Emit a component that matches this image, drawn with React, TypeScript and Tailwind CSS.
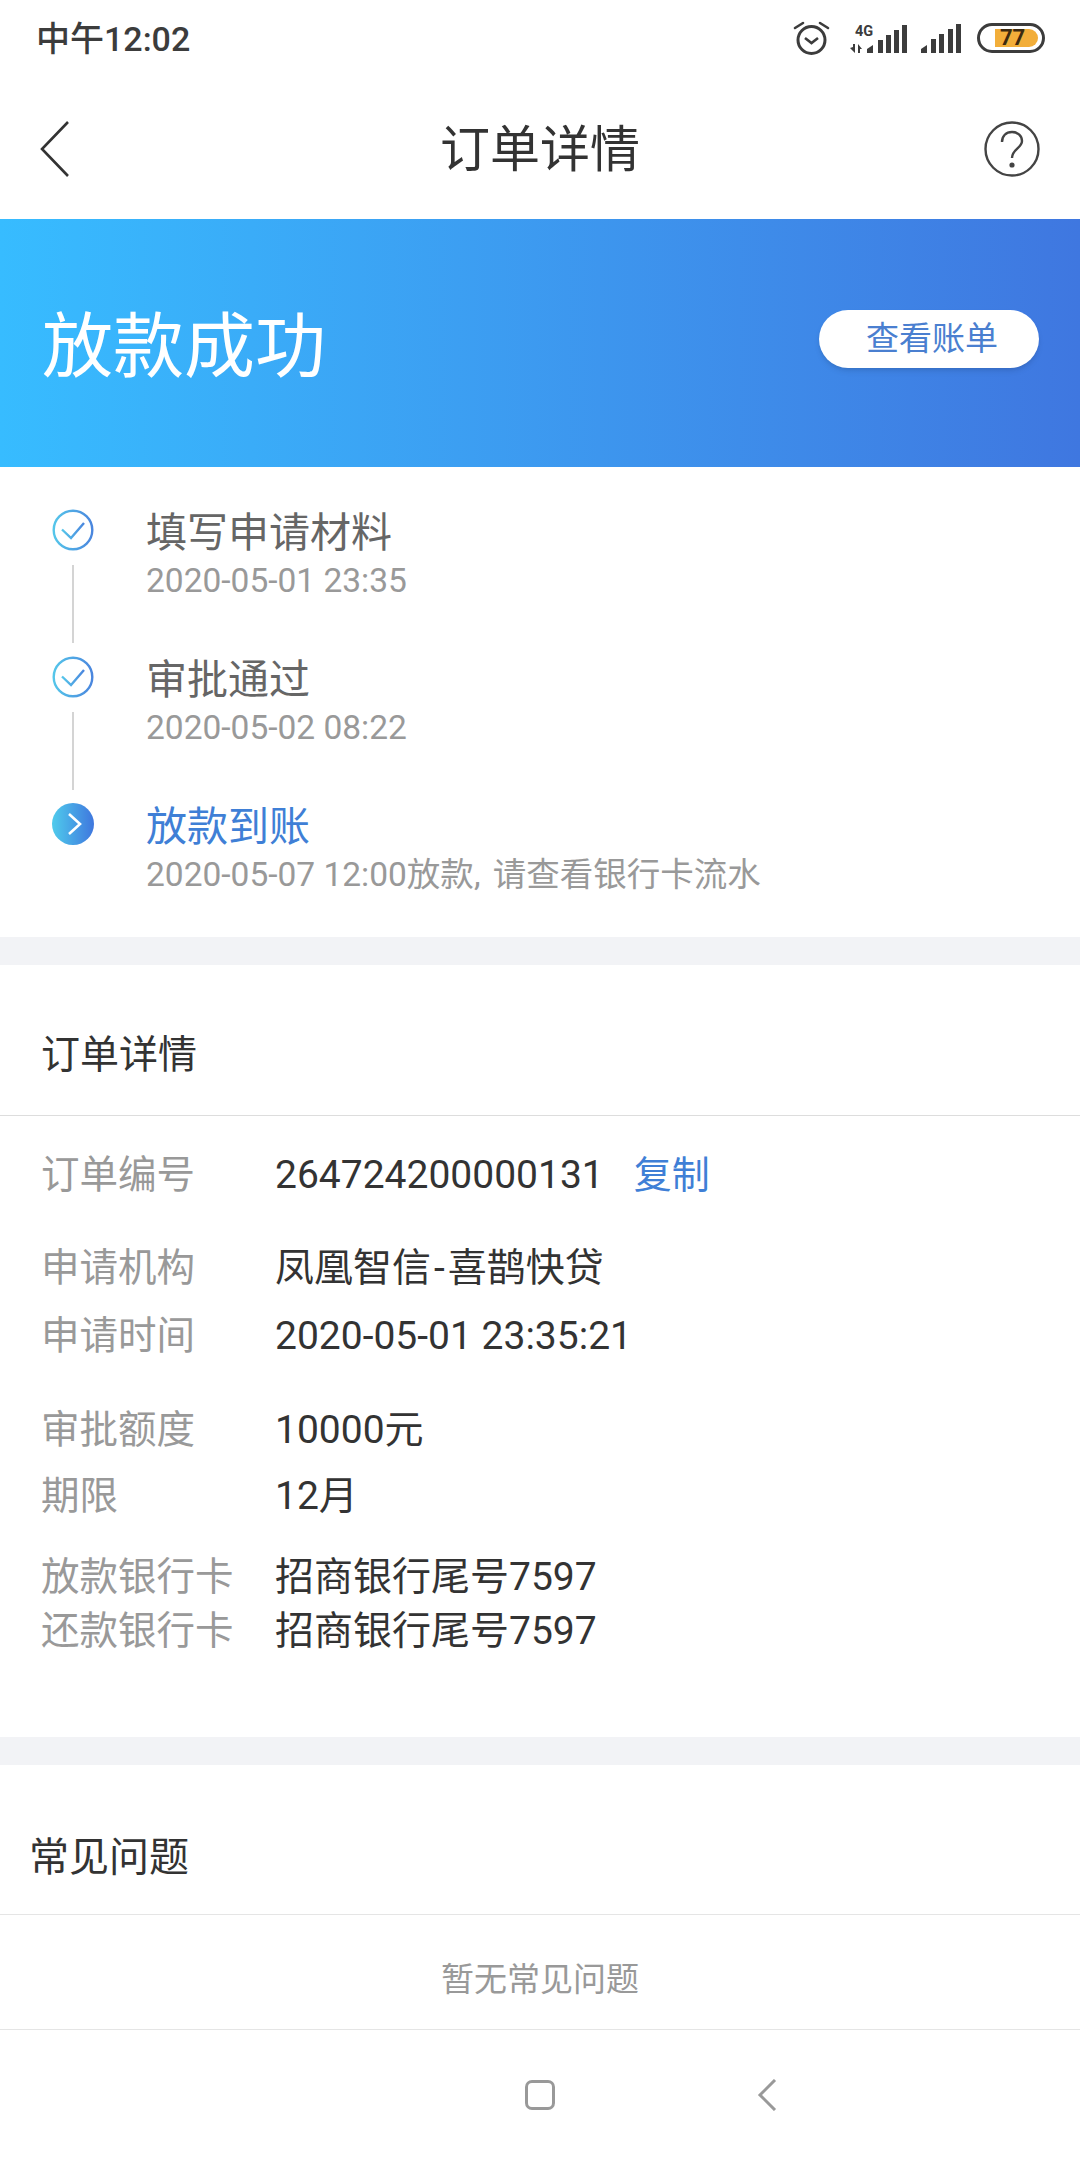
const sans = "font-['Roboto','Noto_Sans_CJK_SC',sans-serif]";

function CheckIcon() {
  return (
    <svg width="42" height="42" viewBox="0 0 42 42" fill="none">
      <defs>
        <linearGradient id="ok" x1="0" y1="0" x2="1" y2="0">
          <stop offset="0" stopColor="#55c6ea" />
          <stop offset="1" stopColor="#4a86de" />
        </linearGradient>
      </defs>
      <circle cx="21" cy="21" r="19.3" stroke="url(#ok)" strokeWidth="2.4" />
      <path d="M10 20.5l9 8.5 13-15" stroke="url(#ok)" strokeWidth="2.4" />
    </svg>
  );
}

function ArrowIcon() {
  return (
    <svg width="42" height="42" viewBox="0 0 42 42" fill="none">
      <defs>
        <linearGradient id="go" x1="0" y1="0" x2="1" y2="0">
          <stop offset="0" stopColor="#4fcbec" />
          <stop offset="1" stopColor="#3f77de" />
        </linearGradient>
      </defs>
      <circle cx="21" cy="21" r="21" fill="url(#go)" />
      <path d="M17 11l11 10-11 10" stroke="#fff" strokeWidth="2.6" />
    </svg>
  );
}

function StatusIcons() {
  return (
    <div className="flex items-center pb-[2px]">
      <svg width="37" height="34" viewBox="0 0 37 34" fill="none" stroke="#3c3c3c" strokeWidth="3">
        <circle cx="18.5" cy="19" r="13.5" />
        <path d="M12 17l6.5 5 6.5-5" strokeWidth="2.6" />
        <path d="M2 7l8-5M35 7l-8-5" strokeLinecap="round" strokeWidth="2.6" />
      </svg>
      <svg className="ml-[20px]" width="57" height="30" viewBox="0 0 57 30" fill="#3c3c3c">
        <text x="5" y="12.5" fontSize="14.5" fontWeight="700" fontFamily="Roboto">4G</text>
        <path d="M0 25l3-1v-3h2v9zM8 30V21l4 5h-2v4z" />
        <path d="M17 30v-4l6-4v8zM28 30V17h5v13zM36 30V12h5v18zM44 30V7h5v23zM52 30V2h5v28z" />
      </svg>
      <svg className="ml-[14px]" width="40" height="29" viewBox="0 0 40 29" fill="#3c3c3c">
        <path d="M0 29v-4l6-4v8zM10 29V15h5v14zM18 29V10h5v19zM27 29V5h5v24zM35 29V0h5v29z" />
      </svg>
      <div className="ml-[16px] flex h-[30px] w-[68px] items-center rounded-full border-[3px] border-[#3c3c3c]">
        <div className="ml-[15px] flex h-[18px] w-[43px] items-center justify-start rounded-r-full bg-[#f2ae3a] pl-[5px] text-[22px] font-bold leading-none text-[#3c2a10]">
          77
        </div>
      </div>
    </div>
  );
}

function Step({ icon, title, date, active, line }: { icon: React.ReactNode; title: string; date: React.ReactNode; active?: boolean; line?: boolean }) {
  return (
    <div className="flex h-[147px]">
      <div className="flex w-[146px] shrink-0 flex-col items-center pr-[1px]">
        <div className="h-[42px] w-[42px]">{icon}</div>
        {line && <div className="mt-[14px] h-[78px] w-[2px] bg-[#d4d4d4]" />}
      </div>
      <div>
        <div className={`text-[41px] leading-[48px] ${active ? "text-[#3f7fd6]" : "text-[#666666]"}`}>{title}</div>
        <div className="mt-[1px] text-[33.5px] leading-[46px] text-[#999999]">{date}</div>
      </div>
    </div>
  );
}

function Row({ label, children, className }: { label: string; children: React.ReactNode; className?: string }) {
  return (
    <div className={`flex text-[39px] leading-[54px] ${className ?? ""}`}>
      <div className="w-[234px] shrink-0 text-[38.5px] text-[#999999]">{label}</div>
      <div className="text-[#333333]">{children}</div>
    </div>
  );
}

export default function App() {
  return (
    <div className={`flex h-[2160px] w-[1080px] flex-col overflow-hidden bg-white ${sans}`}>
      {/* status bar */}
      <div className="flex h-[78px] items-center justify-between pl-[36px] pr-[35px]">
        <div className="text-[34px] font-medium text-[#3c3c3c]">中午12:02</div>
        <StatusIcons />
      </div>

      {/* title bar */}
      <div className="flex h-[141px] items-center px-[40px]">
        <div className="flex-1">
          <svg width="30" height="56" viewBox="0 0 30 56" fill="none" stroke="#333" strokeWidth="2.6">
            <path d="M28 1L2 28l26 27" />
          </svg>
        </div>
        <div className="pt-[4px] text-[50px] text-[#333333]">订单详情</div>
        <div className="flex flex-1 justify-end">
          <svg width="56" height="56" viewBox="0 0 56 56" fill="none" stroke="#444" strokeWidth="2.4">
            <circle cx="28" cy="28" r="26.5" />
            <path d="M18 21c0-6 4-10 10-10s10 4 10 9c0 7-10 8-10 17" />
            <circle cx="28" cy="44" r="1.4" fill="#444" />
          </svg>
        </div>
      </div>

      {/* banner */}
      <div className="flex h-[248px] items-center justify-between bg-gradient-to-r from-[#37bcff] to-[#3f77e0] pl-[42px] pr-[41px]">
        <div className="mt-[8px] text-[71px] text-white">放款成功</div>
        <div className="mb-[8px] flex h-[58px] w-[220px] items-center justify-center rounded-full bg-white pl-[6px] text-[33px] text-[#4a7fd0] shadow-md">
          查看账单
        </div>
      </div>

      {/* progress */}
      <div className="h-[470px] pt-[42px]">
        <Step icon={<CheckIcon />} title="填写申请材料" date="2020-05-01 23:35" line />
        <Step icon={<CheckIcon />} title="审批通过" date="2020-05-02 08:22" line />
        <Step
          icon={<ArrowIcon />}
          title="放款到账"
          date={
            <>
              2020-05-07 12:00放款<span className="mr-[4px]">,</span> 请查看银行卡流水
            </>
          }
          active
        />
      </div>
      <div className="h-[28px] bg-[#f2f3f6]" />

      {/* order */}
      <div className="flex h-[151px] items-center border-b border-[#dddddd] pl-[41px] pt-[30px] text-[39px] text-[#333333]">订单详情</div>
      <div className="h-[621px] px-[41px] pt-[32px]">
        <Row label="订单编号">
          264724200000131<span className="ml-[30px] text-[38px] text-[#3f7fd6]">复制</span>
        </Row>
        <Row label="申请机构" className="mt-[39px]">
          凤凰智信<span className="mx-[3px]">-</span>喜鹊快贷
        </Row>
        <Row label="申请时间" className="mt-[14px]">2020-05-01 23:35:21</Row>
        <Row label="审批额度" className="mt-[40px]">10000元</Row>
        <Row label="期限" className="mt-[12px]">12月</Row>
        <Row label="放款银行卡" className="mt-[27px]">招商银行尾号7597</Row>
        <Row label="还款银行卡">招商银行尾号7597</Row>
      </div>
      <div className="h-[28px] bg-[#f2f3f6]" />

      {/* faq */}
      <div className="flex h-[150px] items-center border-b border-[#e5e5e5] pl-[29px] pt-[36px] text-[40px] text-[#333333]">常见问题</div>
      <div className="flex h-[115px] items-center justify-center border-b border-[#e5e5e5] pt-[16px] text-[33px] text-[#999999]">暂无常见问题</div>

      {/* nav bar */}
      <div className="flex h-[130px] items-center">
        <div className="ml-[525px] h-[30px] w-[30px] rounded-[7px] border-[3px] border-[#999999]" />
        <svg className="ml-[202px]" width="20" height="32" viewBox="0 0 20 32" fill="none" stroke="#999" strokeWidth="3">
          <path d="M18 1L3 16l15 15" />
        </svg>
      </div>
    </div>
  );
}
